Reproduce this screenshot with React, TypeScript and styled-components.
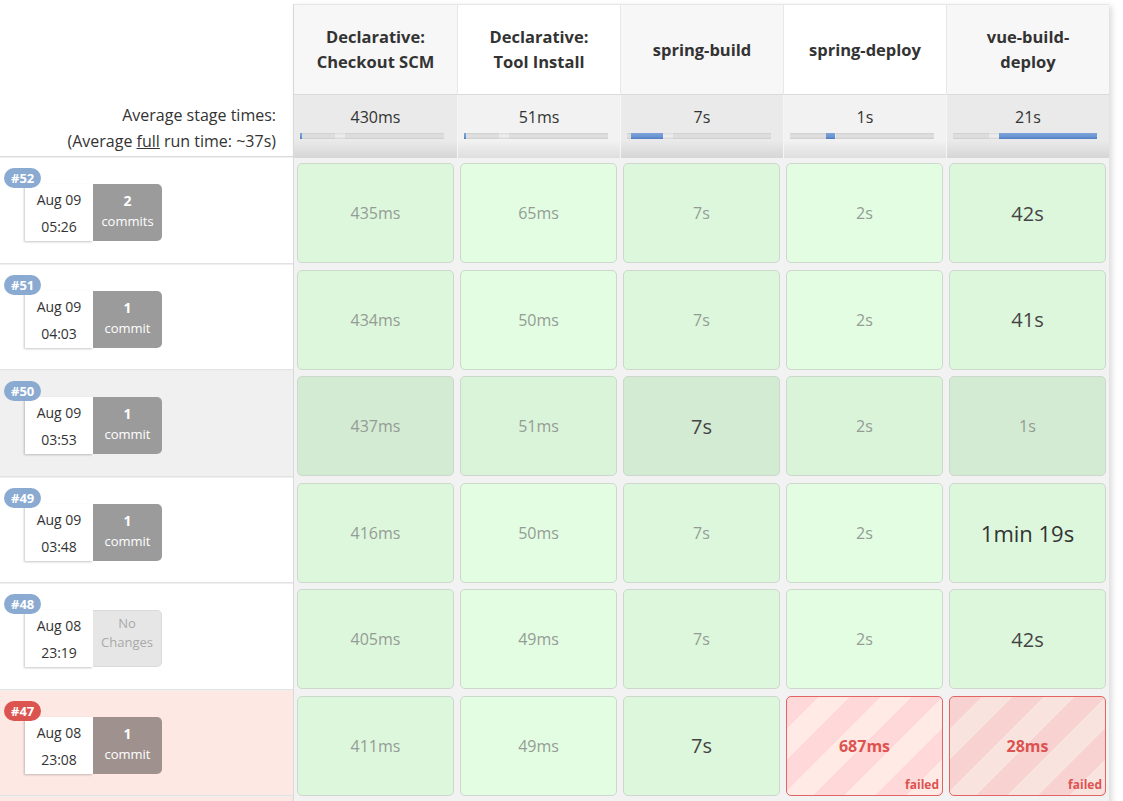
import React from 'react';
import styled, { createGlobalStyle, css } from 'styled-components';

const GlobalStyle = createGlobalStyle`
  html, body { margin: 0; padding: 0; background: #fff; }
  body {
    font-family: "Open Sans", "Noto Sans", sans-serif;
    color: #333;
    overflow: hidden;
  }
`;

type Size = 'sm' | 'md' | 'lg';
type CellData = { t: string; size?: Size; failed?: boolean };
type Build = {
  id: number;
  date: string;
  time: string;
  commits: number;
  state: 'ok' | 'selected' | 'failed';
  cells: CellData[];
};

const stages = [
  { name: ['Declarative:', 'Checkout SCM'], avg: '430ms', fill: [0, 2], marker: 35 },
  { name: ['Declarative:', 'Tool Install'], avg: '51ms', fill: [0, 2], marker: 35 },
  { name: ['spring-build'], avg: '7s', fill: [4, 32], marker: 36 },
  { name: ['spring-deploy'], avg: '1s', fill: [36, 9], marker: 36 },
  { name: ['vue-build-', 'deploy'], avg: '21s', fill: [46, 98], marker: 36 },
];

const builds: Build[] = [
  {
    id: 52, date: 'Aug 09', time: '05:26', commits: 2, state: 'ok',
    cells: [{ t: '435ms' }, { t: '65ms' }, { t: '7s' }, { t: '2s' }, { t: '42s', size: 'md' }],
  },
  {
    id: 51, date: 'Aug 09', time: '04:03', commits: 1, state: 'ok',
    cells: [{ t: '434ms' }, { t: '50ms' }, { t: '7s' }, { t: '2s' }, { t: '41s', size: 'md' }],
  },
  {
    id: 50, date: 'Aug 09', time: '03:53', commits: 1, state: 'selected',
    cells: [{ t: '437ms' }, { t: '51ms' }, { t: '7s', size: 'md' }, { t: '2s' }, { t: '1s' }],
  },
  {
    id: 49, date: 'Aug 09', time: '03:48', commits: 1, state: 'ok',
    cells: [{ t: '416ms' }, { t: '50ms' }, { t: '7s' }, { t: '2s' }, { t: '1min 19s', size: 'lg' }],
  },
  {
    id: 48, date: 'Aug 08', time: '23:19', commits: 0, state: 'ok',
    cells: [{ t: '405ms' }, { t: '49ms' }, { t: '7s' }, { t: '2s' }, { t: '42s', size: 'md' }],
  },
  {
    id: 47, date: 'Aug 08', time: '23:08', commits: 1, state: 'failed',
    cells: [
      { t: '411ms' }, { t: '49ms' }, { t: '7s', size: 'md' },
      { t: '687ms', failed: true }, { t: '28ms', failed: true },
    ],
  },
];

const ROW_H = '106.5px';

/* ---------- layout ---------- */
const Page = styled.div`
  display: flex;
  align-items: flex-start;
  padding-top: 4px;
`;

/* ---------- left column ---------- */
const LeftColumn = styled.div`
  width: 293px;
  flex: none;
  display: flex;
  flex-direction: column;
`;

const LeftHeader = styled.div`
  height: 153px;
  box-sizing: border-box;
  display: flex;
  flex-direction: column;
  justify-content: flex-end;
  align-items: flex-end;
  padding: 0 17px 2px 0;
  border-bottom: 1px solid #dcdcdc;
  font-size: 16px;
  line-height: 26px;
  color: #333;
  text-align: right;
`;

const Underlined = styled.span`
  text-decoration: underline;
`;

const LeftRow = styled.div<{ $state: Build['state'] }>`
  position: relative;
  height: ${ROW_H};
  box-sizing: border-box;
  border-top: 1px solid #efefef;
  border-bottom: 1px solid #e2e2e2;
  padding: 26px 0 0 25px;
  background: ${(p) =>
    p.$state === 'selected' ? '#f0f0f0' : p.$state === 'failed' ? '#fde8e4' : '#fff'};
`;

const LeftStub = styled.div`
  height: 20px;
  border-top: 1px solid #efefef;
  background: #fde8e4;
`;

const BuildBadge = styled.span<{ $failed: boolean }>`
  position: absolute;
  top: 10px;
  left: 4px;
  height: 20px;
  padding: 0 7px;
  border-radius: 10px;
  background: ${(p) => (p.$failed ? '#dc5450' : '#8aaad2')};
  color: #fff;
  font-size: 13px;
  font-weight: 700;
  line-height: 20px;
  z-index: 1;
`;

const BuildInfo = styled.div`
  display: flex;
  height: 57px;
`;

const DateBox = styled.div`
  width: 68px;
  background: #fff;
  box-shadow: -1px 1px 2px rgba(0, 0, 0, 0.22);
  display: flex;
  flex-direction: column;
  align-items: center;
  padding-top: 6px;
  gap: 7px;
  box-sizing: border-box;
  font-size: 14px;
  line-height: 20px;
  color: #333;
`;

const CommitBox = styled.div<{ $kind: 'ok' | 'failed' | 'none' }>`
  width: 69px;
  box-sizing: border-box;
  border-radius: 0 5px 5px 0;
  display: flex;
  flex-direction: column;
  align-items: center;
  text-align: center;
  ${(p) =>
    p.$kind === 'none'
      ? css`
          background: #e6e6e6;
          border: 1px solid #dadada;
          border-left: none;
          color: #a9a9a9;
          padding-top: 3px;
          font-size: 13px;
          line-height: 19px;
        `
      : css`
          background: ${p.$kind === 'failed' ? '#9e918e' : '#9b9b9b'};
          color: #fff;
          padding-top: 7px;
          font-size: 13px;
          line-height: 20px;
        `}
`;

const CommitCount = styled.span`
  font-size: 14px;
  font-weight: 700;
`;

/* ---------- stage table ---------- */
const StageTable = styled.div`
  flex: none;
  display: flex;
  flex-direction: column;
  border-top: 1px solid #e6e6e6;
  border-left: 1px solid #d9d9d9;
  box-shadow: 3px 2px 6px rgba(0, 0, 0, 0.14);
`;

const GridRow = styled.div<{ $h: string }>`
  display: grid;
  grid-template-columns: repeat(5, 163px);
  height: ${(p) => p.$h};
`;

const StageName = styled.div<{ $alt: boolean }>`
  display: flex;
  flex-direction: column;
  justify-content: center;
  align-items: center;
  background: ${(p) => (p.$alt ? '#fff' : '#f7f7f7')};
  border-left: 1px solid #e8e8e8;
  &:first-child { border-left: none; }
  font-size: 16.5px;
  font-weight: 700;
  line-height: 25px;
  color: #333;
  white-space: nowrap;
  padding-bottom: 1px;
`;

const AvgCell = styled.div<{ $alt: boolean }>`
  box-sizing: border-box;
  border-top: 1px solid #dadada;
  border-left: 1px solid #f6f6f6;
  &:first-child { border-left: none; }
  background: ${(p) =>
    p.$alt
      ? 'linear-gradient(to bottom, #f2f2f2 0%, #f2f2f2 72%, #dedede 100%)'
      : 'linear-gradient(to bottom, #eaeaea 0%, #eaeaea 72%, #d6d6d6 100%)'};
  display: flex;
  flex-direction: column;
  align-items: flex-start;
  padding: 9px 0 0 6px;
  font-size: 16px;
  line-height: 26px;
  color: #333;
`;

const AvgText = styled.div`
  align-self: stretch;
  text-align: center;
  padding-right: 6px;
`;

const Track = styled.div`
  position: relative;
  margin-top: 3px;
  width: 144px;
  height: 6px;
  box-sizing: border-box;
  background: linear-gradient(to bottom, #cfcfcf 0%, #dedede 30%, #dedede 70%, #cbcbcb 100%);
`;

const TrackMarker = styled.div`
  position: absolute;
  top: 0;
  height: 6px;
  width: 10px;
  background: linear-gradient(to bottom, #dcdcdc 0%, #ececec 40%, #ececec 60%, #d6d6d6 100%);
`;

const TrackFill = styled.div`
  position: absolute;
  top: 0;
  height: 6px;
  background: linear-gradient(to bottom, #7da3da 0%, #6c95d2 60%, #4f7cc2 100%);
`;

const BodyCell = styled.div`
  background: #f1f2f1;
  padding: 5px 3px 0 3px;
`;

const StageBox = styled.div<{ $col: number; $failed: boolean; $selected: boolean }>`
  position: relative;
  height: 100px;
  box-sizing: border-box;
  border-radius: 5px;
  display: flex;
  align-items: center;
  justify-content: center;
  ${(p) => {
    const odd = p.$col % 2 === 0;
    if (p.$failed) {
      const a = odd ? '#f7d2d1' : '#ffd9d9';
      const b = odd ? '#f8e3df' : '#ffeae6';
      return css`
        border: 1px solid #e46461;
        background: repeating-linear-gradient(135deg, ${a} 0 22px, ${b} 22px 44px);
      `;
    }
    const bg = p.$selected ? (odd ? '#d2ebd2' : '#daf4da') : odd ? '#ddf7dd' : '#e3fde3';
    return css`
      border: 1px solid #cdd8cd;
      background: ${bg};
    `;
  }}
`;

const Duration = styled.span<{ $size: Size; $failed: boolean }>`
  ${(p) =>
    p.$failed
      ? css`
          font-size: 16px;
          font-weight: 700;
          color: #dd5350;
        `
      : p.$size === 'lg'
      ? css`
          font-size: 22px;
          color: #333;
        `
      : p.$size === 'md'
      ? css`
          font-size: 20px;
          color: #444;
        `
      : css`
          font-size: 16px;
          color: #959c95;
        `}
`;

const FailedTag = styled.span`
  position: absolute;
  right: 3px;
  bottom: 2px;
  font-size: 12px;
  font-weight: 700;
  color: #dd5350;
  line-height: 16px;
`;

const StubRow = styled.div`
  height: 20px;
  background: #f1f2f1;
`;

export default function App() {
  return (
    <>
      <GlobalStyle />
      <Page>
        <LeftColumn>
          <LeftHeader>
            <div>Average stage times:</div>
            <div>
              (Average <Underlined>full</Underlined> run time: ~37s)
            </div>
          </LeftHeader>
          {builds.map((b) => (
            <LeftRow key={b.id} $state={b.state}>
              <BuildBadge $failed={b.state === 'failed'}>#{b.id}</BuildBadge>
              <BuildInfo>
                <DateBox>
                  <span>{b.date}</span>
                  <span>{b.time}</span>
                </DateBox>
                {b.commits === 0 ? (
                  <CommitBox $kind="none">
                    <span>No</span>
                    <span>Changes</span>
                  </CommitBox>
                ) : (
                  <CommitBox $kind={b.state === 'failed' ? 'failed' : 'ok'}>
                    <CommitCount>{b.commits}</CommitCount>
                    <span>{b.commits === 1 ? 'commit' : 'commits'}</span>
                  </CommitBox>
                )}
              </BuildInfo>
            </LeftRow>
          ))}
          <LeftStub />
        </LeftColumn>

        <StageTable>
          <GridRow $h="89px">
            {stages.map((s, i) => (
              <StageName key={i} $alt={i % 2 === 1}>
                {s.name.map((line) => (
                  <span key={line}>{line}</span>
                ))}
              </StageName>
            ))}
          </GridRow>
          <GridRow $h="64px">
            {stages.map((s, i) => (
              <AvgCell key={i} $alt={i % 2 === 1}>
                <AvgText>{s.avg}</AvgText>
                <Track>
                  <TrackMarker style={{ left: s.marker }} />
                  <TrackFill style={{ left: s.fill[0], width: s.fill[1] }} />
                </Track>
              </AvgCell>
            ))}
          </GridRow>
          {builds.map((b) => (
            <GridRow key={b.id} $h={ROW_H}>
              {b.cells.map((c, i) => (
                <BodyCell key={i}>
                  <StageBox $col={i} $failed={!!c.failed} $selected={b.state === 'selected'}>
                    <Duration $size={c.size ?? 'sm'} $failed={!!c.failed}>
                      {c.t}
                    </Duration>
                    {c.failed && <FailedTag>failed</FailedTag>}
                  </StageBox>
                </BodyCell>
              ))}
            </GridRow>
          ))}
          <StubRow />
        </StageTable>
      </Page>
    </>
  );
}
